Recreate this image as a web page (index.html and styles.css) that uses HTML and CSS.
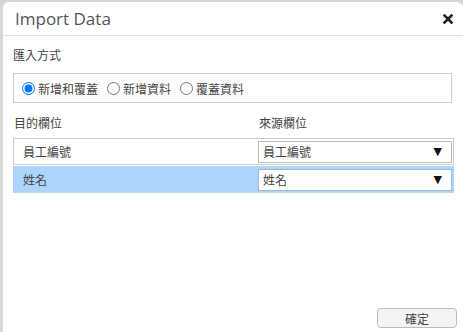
FILE: index.html
```html
<!DOCTYPE html>
<html lang="zh-Hant">
<head>
  <meta charset="UTF-8">
  <title>Import Data</title>
  <link rel="stylesheet" href="styles.css">
</head>
<body>
  <div class="dialog">
    <div class="dialog-header">
      <span class="dialog-title">Import Data</span>
      <svg class="close" width="10" height="10" viewBox="0 0 10 10">
        <path d="M1.5 1.5 L8.5 8.5 M8.5 1.5 L1.5 8.5" stroke="#222" stroke-width="2.6" stroke-linecap="square"/>
      </svg>
    </div>
    <div class="dialog-body">
      <div class="label">匯入方式</div>
      <div class="mode-box">
        <label class="opt"><input type="radio" name="mode" checked>新增和覆蓋</label>
        <label class="opt"><input type="radio" name="mode">新增資料</label>
        <label class="opt"><input type="radio" name="mode">覆蓋資料</label>
      </div>

      <div class="map-head">
        <span class="col-left">目的欄位</span>
        <span class="col-right">來源欄位</span>
      </div>
      <div class="map-row">
        <span class="col-left">員工編號</span>
        <div class="select"><span>員工編號</span><span class="arrow">▼</span></div>
      </div>
      <div class="map-row selected">
        <span class="col-left">姓名</span>
        <div class="select"><span>姓名</span><span class="arrow">▼</span></div>
      </div>
    </div>
    <div class="dialog-footer">
      <button class="btn">確定</button>
    </div>
  </div>
</body>
</html>
```

FILE: styles.css
```css
body {
  margin: 0;
  background: #d6d6d6;
  font-family: "Noto Sans CJK TC", "Noto Sans", sans-serif;
  font-size: 12px;
  color: #444;
}

.dialog {
  margin: 2px 0 0 3px;
  width: 460px;
  height: 330px;
  background: #fff;
  border-radius: 6px 6px 0 0;
  display: flex;
  flex-direction: column;
}

.dialog-header {
  height: 33px;
  border-bottom: 1px solid #e3e3e3;
  display: flex;
  align-items: center;
  justify-content: space-between;
  padding: 0 10px 0 12px;
}

.dialog-title {
  font-family: "Open Sans", sans-serif;
  font-size: 17px;
  color: #555;
  margin-top: -1px;
}

.close {
  margin-top: 1px;
}

.dialog-body {
  flex: 1;
  padding: 10px 9px 0 10px;
}

.label {
  line-height: 18px;
  margin-bottom: 9px;
}

.mode-box {
  height: 28px;
  border: 1px solid #ccc;
  display: flex;
  align-items: center;
  padding-left: 8px;
  gap: 9px;
  margin-right: 2px;
}

.opt {
  display: flex;
  align-items: center;
}

.opt input {
  margin: 0 3px 0 0;
  width: 13px;
  height: 13px;
}

.map-head {
  display: flex;
  line-height: 18px;
  margin-top: 11px;
  margin-bottom: 6px;
}

.col-left {
  width: 245px;
  flex: none;
}

.map-head .col-left {
  padding-left: 1px;
}

.map-row {
  display: flex;
  align-items: center;
  height: 25px;
  border: 1px solid #ccc;
  margin-bottom: 1px;
}

.map-row .col-left {
  padding-left: 9px;
  width: 235px;
}

.map-row.selected {
  background: #acd5fb;
  border-color: #acd5fb;
  border-bottom-color: #c4d8ea;
}

.select {
  flex: 1;
  height: 20px;
  margin-right: 1px;
  border: 1px solid #bbb;
  background: #fff;
  display: flex;
  align-items: center;
  justify-content: space-between;
  padding: 0 9px 0 4px;
}

.selected .select {
  border-color: #9fb8cc;
}

.arrow {
  font-family: "DejaVu Sans", sans-serif;
  font-size: 11px;
  color: #111;
}

.dialog-footer {
  display: flex;
  justify-content: flex-end;
  padding: 0 6px 4px 0;
}

.btn {
  width: 80px;
  height: 20px;
  border: 1px solid #bbb;
  border-radius: 4px;
  background: #f4f4f4;
  font-family: "Noto Sans CJK TC", sans-serif;
  font-size: 12px;
  color: #444;
  padding: 0;
}
```
